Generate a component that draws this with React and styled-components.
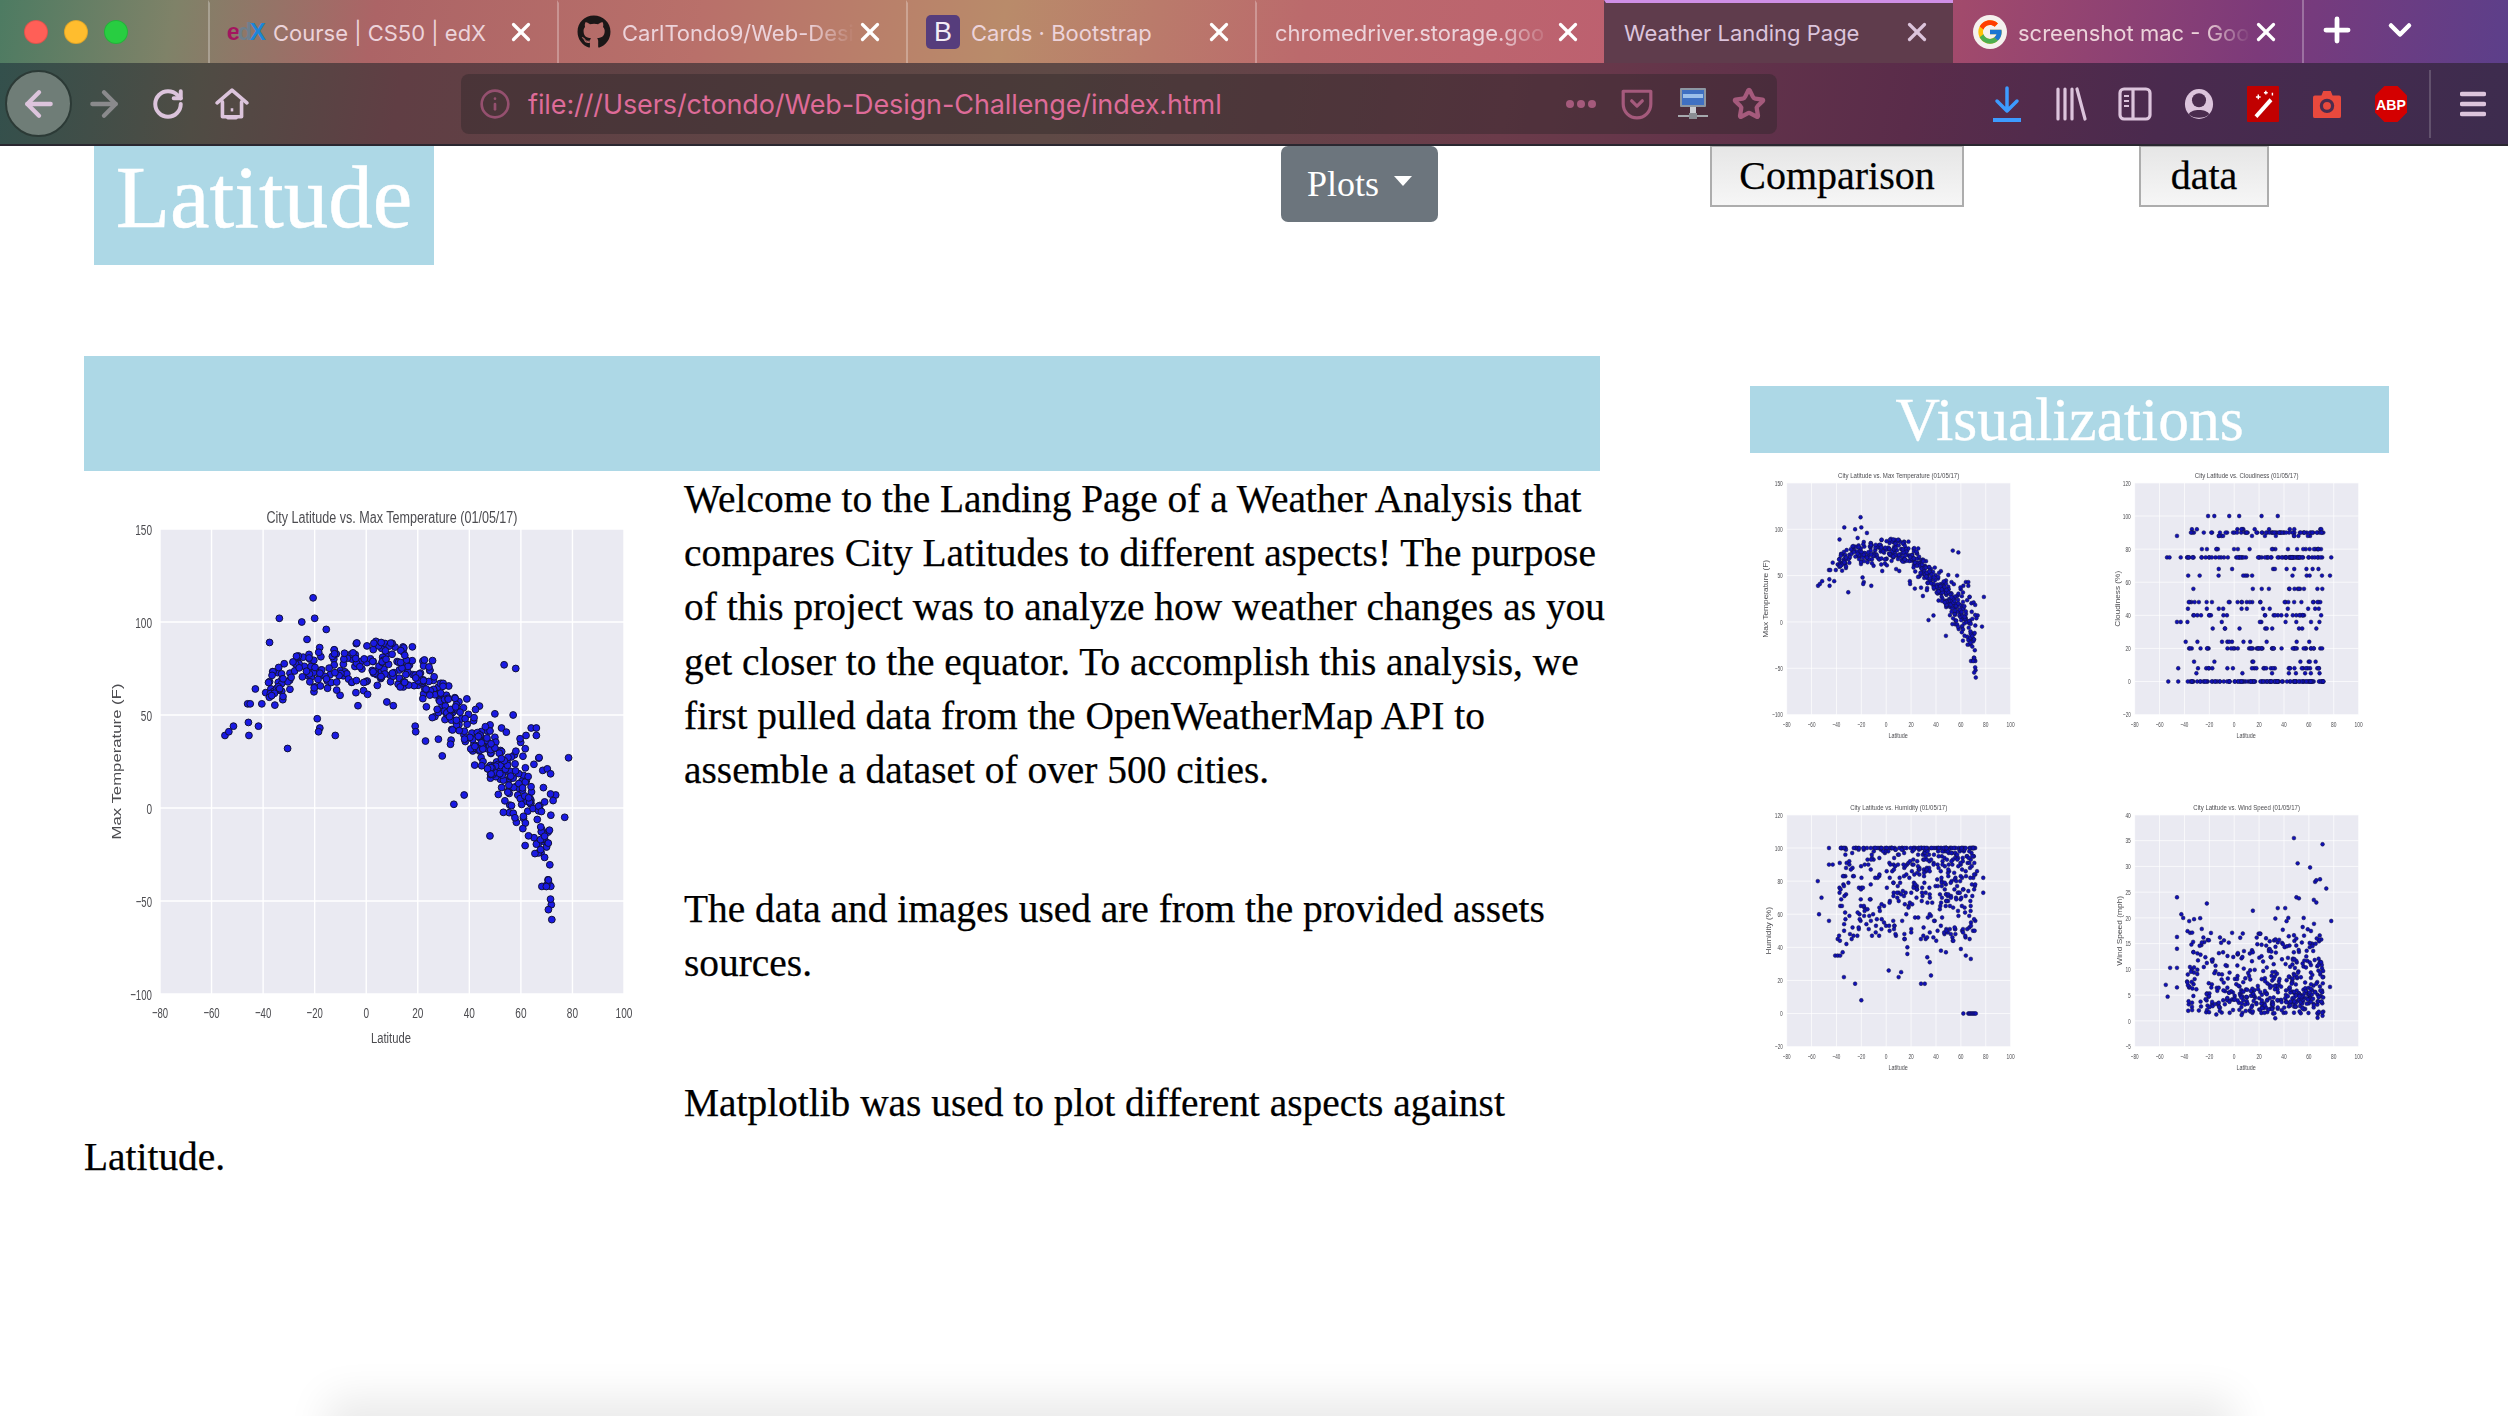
import React from 'react';
import styled, { createGlobalStyle } from 'styled-components';
import { ArrowLeft, ArrowRight, RotateCw, X, Plus, ChevronDown, Info, Star } from 'lucide-react';
import { FaGithub } from 'react-icons/fa';
import { FcGoogle } from 'react-icons/fc';

const GlobalStyle = createGlobalStyle`
  html, body {
    margin: 0;
    padding: 0;
    background: #fff;
  }
  * {
    box-sizing: border-box;
  }
`;

const Page = styled.div`
  position: relative;
  width: 2508px;
  height: 1416px;
  overflow: hidden;
  font-family: "Liberation Serif", serif;
  color: #000;
`;

const BrowserChrome = styled.header`
  height: 146px;
  background: #2a2730;
`;

const TabStrip = styled.div`
  display: flex;
  height: 63px;
  padding-left: 208px;
  background: linear-gradient(100deg, #4d7b62 0%, #7f8268 7%, #ac6466 15%, #b9706a 28%, #b98b6a 40%, #bb6a6c 52%, #bd5f70 66%, #a14a6c 78%, #7c3a7a 90%, #5c3f8a 100%);
`;

const Lights = styled.div`
  display: flex;
  align-items: center;
  gap: 16px;
  width: 0;
  margin-left: -184px;
  margin-right: 184px;
`;

const Light = styled.span`
  flex: none;
  width: 24px;
  height: 24px;
  border-radius: 50%;
  background: ${(p) => p.$color};
  border: 1px solid rgba(0, 0, 0, 0.12);
`;

const Tab = styled.div`
  display: flex;
  align-items: center;
  width: 349px;
  height: 63px;
  padding: 0 21px 2px 18px;
  border-left: 2px solid ${(p) => (p.$plain ? 'transparent' : 'rgba(255, 255, 255, 0.28)')};
  background: ${(p) => (p.$active ? '#5f3c4c' : 'transparent')};
  border-top: 3px solid ${(p) => (p.$active ? '#cf8fe6' : 'transparent')};
  color: ${(p) => (p.$active ? '#dcc4dc' : '#fff')};
  font-family: Inter, "Liberation Sans", sans-serif;
`;

const TabIcon = styled.span`
  display: flex;
  flex: none;
  align-items: center;
  justify-content: center;
  width: 34px;
  height: 34px;
  margin-right: 11px;
`;

const TabTitle = styled.span`
  flex: 1;
  overflow: hidden;
  padding-top: 2px;
  white-space: nowrap;
  font-size: 22px;
  color: ${(p) => (p.$active ? '#dcc4dc' : '#ecd3da')};
  ${(p) => p.$fade && 'mask-image: linear-gradient(90deg, #000 80%, transparent 100%);'}
`;

const EdxLogo = styled.span`
  font-family: "Liberation Sans", sans-serif;
  font-size: 24px;
  font-weight: 700;
  letter-spacing: -2.5px;
  color: #a3155f;
  & > i {
    font-style: normal;
    color: #6f7f8c;
  }
  & > b {
    color: #1c86d8;
  }
`;

const BootstrapLogo = styled.span`
  display: flex;
  align-items: center;
  justify-content: center;
  width: 34px;
  height: 34px;
  border-radius: 5px;
  background: #563d7c;
  color: #f2ecf6;
  font-family: "Liberation Sans", sans-serif;
  font-size: 27px;
`;

const GoogleBadge = styled.span`
  display: flex;
  align-items: center;
  justify-content: center;
  width: 34px;
  height: 34px;
  border-radius: 50%;
  background: #f5f1ee;
`;

const StripActions = styled.div`
  display: flex;
  align-items: center;
  height: 63px;
  padding-bottom: 4px;
  border-left: 2px solid rgba(255, 255, 255, 0.28);
  color: #fff;
`;

const StripButton = styled.span`
  display: flex;
  align-items: center;
  justify-content: center;
  width: ${(p) => p.$width}px;
`;

const Toolbar = styled.div`
  display: flex;
  align-items: center;
  height: 81px;
  padding-left: 5px;
  background: linear-gradient(100deg, #33504c 0%, #4f4c44 8%, #603e44 16%, #5f4a46 42%, #6b3b4a 60%, #5a2c4a 76%, #4a2a4e 86%, #3d2c4e 100%);
`;

const BackCircle = styled.span`
  display: flex;
  align-items: center;
  justify-content: center;
  width: 67px;
  height: 67px;
  border-radius: 50%;
  background: #6f7d77;
  border: 2px solid #2c3a36;
  color: #dcc4dc;
`;

const ToolCell = styled.span`
  display: flex;
  flex: none;
  align-items: center;
  justify-content: center;
  width: 64px;
  height: 64px;
  color: ${(p) => p.$color || '#dcc4dc'};
`;

const UrlBar = styled.div`
  display: flex;
  align-items: center;
  width: 1316px;
  height: 60px;
  margin: 0 198px 0 197px;
  padding-left: 18px;
  border-radius: 8px;
  background: rgba(45, 38, 40, 0.42);
  font-family: Inter, "Liberation Sans", sans-serif;
`;

const UrlText = styled.span`
  flex: 1;
  margin-left: 17px;
  padding-top: 2px;
  font-size: 27px;
  letter-spacing: -0.1px;
  color: #de6b98;
`;

const UrlCell = styled.span`
  display: flex;
  flex: none;
  align-items: center;
  justify-content: center;
  width: 56px;
  color: #a55a7c;
`;

const ToolSep = styled.span`
  width: 2px;
  height: 68px;
  margin: 0 10px 0 6px;
  background: rgba(255, 255, 255, 0.18);
`;

const TopNav = styled.nav`
  display: grid;
  grid-template-columns: 1187px 429px 429px auto;
  align-items: start;
  height: 119px;
  padding-left: 94px;
`;

const Title = styled.h1`
  width: 340px;
  height: 119px;
  margin: 0;
  background: #add8e6;
  color: #fff;
  font-size: 89px;
  font-weight: 400;
  line-height: 102px;
  text-align: center;
  -webkit-text-stroke: 0.5px #fff;
`;

const DropdownButton = styled.button`
  display: flex;
  align-items: center;
  width: 157px;
  height: 76px;
  padding: 0 0 0 26px;
  border: none;
  border-radius: 7px;
  background: #6c757d;
  color: #fff;
  font-family: inherit;
  font-size: 36px;
  &::after {
    content: '';
    margin: -6px 0 0 15px;
    border-top: 10px solid #fff;
    border-left: 9px solid transparent;
    border-right: 9px solid transparent;
  }
`;

const PlainButton = styled.button`
  height: 61px;
  width: ${(p) => p.$width}px;
  padding: 0 0 2px;
  border: 2px solid #adadad;
  border-top-width: 1px;
  background: linear-gradient(#e6e6e6, #f6f6f6);
  color: #000;
  font-family: inherit;
  font-size: 40px;
  -webkit-text-stroke: 0.25px #000;
`;

const Main = styled.main`
  display: flex;
  align-items: flex-start;
  gap: 150px;
  margin-top: 91px;
  padding-left: 84px;
`;

const Article = styled.section`
  width: 1516px;
`;

const Band = styled.div`
  height: 115px;
  margin-bottom: 1px;
  background: #add8e6;
`;

const FloatChart = styled.div`
  float: left;
  margin: 15px 24px 44px 0;
`;

const Para = styled.p`
  margin: 0 0 85px;
  font-size: 39.4px;
  line-height: 54.2px;
  white-space: nowrap;
  -webkit-text-stroke: 0.25px #000;
`;

const Aside = styled.aside`
  width: 639px;
  padding-top: 30px;
`;

const AsideTitle = styled.h2`
  height: 67px;
  margin: 0 0 9px;
  background: #add8e6;
  color: #fff;
  font-size: 61.5px;
  font-weight: 400;
  line-height: 66px;
  text-align: center;
  -webkit-text-stroke: 0.4px #fff;
`;

const ChartGrid = styled.div`
  display: grid;
  grid-template-columns: 278px 278px;
  column-gap: 70px;
  row-gap: 48px;
`;

const ChartSvg = styled.svg`
  display: block;
  width: ${(p) => (p.$small ? 278 : 576)}px;
  height: ${(p) => (p.$small ? 284 : 570)}px;
  filter: blur(${(p) => (p.$small ? 0.45 : 0.5)}px);
  font-family: "Liberation Sans", sans-serif;
  & text {
    fill: #4c4c50;
  }
`;

const BottomShadow = styled.div`
  position: absolute;
  left: 345px;
  width: 1870px;
  bottom: -40px;
  height: 40px;
  box-shadow: 0 0 42px 18px rgba(0, 0, 0, 0.085);
`;

// seeded so the dots stay put between runs
let seed = 20170105;
const rnd = () => {
  seed = (seed * 1664525 + 1013904223) % 4294967296;
  return seed / 4294967296;
};
const gauss = () => (rnd() + rnd() + rnd() - 1.5) / 0.75;

const lerp = (table, x) => {
  for (let i = 1; i < table.length; i++) {
    if (x <= table[i][0]) {
      const [x0, y0] = table[i - 1];
      const [x1, y1] = table[i];
      return y0 + ((x - x0) / (x1 - x0)) * (y1 - y0);
    }
  }
  return table[table.length - 1][1];
};

const tempCurve = [[-60, 45], [-40, 62], [-25, 74], [-10, 76], [10, 77], [20, 73], [30, 56], [40, 42], [50, 27], [60, 10], [72, -12], [80, -5]];
const spread = [[-60, 6], [-20, 10], [20, 8], [40, 12], [55, 15], [72, 30]];

const lats = [];
for (let i = 0; i < 500; i++) {
  const r = rnd();
  let lat;
  if (r < 0.2) lat = -38 + rnd() * 28;
  else if (r < 0.42) lat = -10 + rnd() * 30;
  else if (r < 0.72) lat = 20 + rnd() * 30;
  else lat = 48 + rnd() * 24;
  lats.push(lat);
}

const clamp = (v, a, b) => Math.min(b, Math.max(a, v));

const tempPoints = [
  [-54.8, 39], [-53.3, 41], [-51.5, 44], [-45.5, 39], [-45.7, 46], [-41.8, 44], [-30.5, 32], [-33.7, 102],
  [-25, 100], [-20.6, 113], [-20, 102], [-15.5, 96], [-37.5, 89], [-12, 39], [-19, 48], [-18, 43], [-18.5, 41],
  [53.5, 77], [58, 75], [57, 50], [77, -5], [78.5, 27], [73.5, 7], [72.5, 4], [72, -60], [71.8, -52], [71.5, -49],
  [34, 2], [48, -15], [52.5, 43], [64, 43], [66, 43], [66, 39], [62, 39], [19, 44], [19.2, 41], [23, 36], [28, 37],
  [29.5, 28], [38, 7], [-46, 56], [-45, 56], [-43, 64], [-40.5, 56], [-39, 62], [-3.2, 55], [-4, 62], [8, 57], [10.5, 55],
  ...lats.map((lat) => [lat, lerp(tempCurve, lat) + gauss() * lerp(spread, lat)]),
];

const cloudLevels = [0, 0, 0, 0, 0, 0, 0, 0, 0, 5, 8, 8, 12, 20, 20, 20, 24, 32, 36, 40, 40, 44, 48, 48, 56, 64, 68, 75, 75, 75, 75, 75, 75, 80, 88, 90, 90, 90, 90, 90, 92];
const cloudPoints = [
  [-46, 88], [-54, 75], [-52, 75], [-43, 75], [-39, 24], [-46, 36], [-43, 36], [77, 64], [78, 75],
  [-21, 100], [-16, 100], [-4, 100], [4, 100], [22, 100], [35, 100], [-34, 92], [-30, 92], [-53, 0], [-45, 0], [-45, 8],
  ...lats.map((lat) => [lat, cloudLevels[Math.floor(rnd() * cloudLevels.length)]]),
];

const humidityPoints = [
  [-55, 80], [-54, 60], [-52, 70], [-46, 100], [-46, 90], [-46, 56], [-43, 90], [-39, 45], [-41, 35], [-39, 35], [-37, 35],
  [-34, 22], [-25, 18], [-20, 8], [-35, 37], [-32, 42], [78, 82], [78, 73], [73, 86], [28, 18], [31, 18], [36, 23],
  [62, 0], [66, 0], [67, 0], [68, 0], [69, 0], [70, 0], [71, 0], [72, 0], [60, 39], [64, 35], [68, 33],
  [2, 26], [10, 22], [12, 25], [17, 36], [17, 40], [33, 34], [35, 31], [44, 38], [48, 37],
  ...lats.map((lat) => [lat, rnd() < 0.16 ? 100 : Math.round(100 - Math.pow(rnd(), 1.5) * 56)]),
];

const windPoints = [
  [-55, 7], [-53.5, 4.7], [-51.5, 10.3], [-46, 24], [-46, 16.3], [-46, 14], [-46, 10.3], [-46, 6.5], [-42.5, 20.7], [-41, 20],
  [-22, 22.8], [15, 21.4], [48, 35.5], [71, 34.3], [51, 30.6], [61, 29.8], [69, 27.5], [65, 27], [66, 27.3], [74, 25.7],
  [50, 24], [52, 23.8], [64, 23.5], [66, 23], [35, 21.9], [41, 21.9], [78, 19.4], [77, 6.6], [33, 0.5], [67, 0.6], [71, 1],
  ...lats.map((lat) => [lat, clamp(1.1 + rnd() * 4.5 + Math.pow(rnd(), 2.6) * 15 + (lat < -25 ? rnd() * 5 : 0), 1, 20)]),
];

// plot box inside the 576x570 picture
const AX = { left: 76, right: 540, top: 42, bottom: 507 };
const xTicks = [-80, -60, -40, -20, 0, 20, 40, 60, 80, 100];

const range = (from, to, step) => {
  const out = [];
  for (let v = from; v <= to; v += step) out.push(v);
  return out;
};

const tickText = (v) => String(v).replace('-', '\u2212');
const tickLen = (v) => String(Math.abs(v)).length * 5.6 + (v < 0 ? 5 : 0);

function Chart({ title, titleLen, yLabel, yLabelLen, labelX = 37, yMin, yMax, yStep, points, small }) {
  const px = (v) => AX.left + ((v + 80) / 180) * (AX.right - AX.left);
  const py = (v) => AX.bottom - ((v - yMin) / (yMax - yMin)) * (AX.bottom - AX.top);
  const yTicks = range(yMin, yMax, yStep);
  const midY = (AX.top + AX.bottom) / 2;
  return (
    <ChartSvg viewBox="0 0 576 570" preserveAspectRatio="none" $small={small}>
      <rect x={AX.left} y={AX.top} width={AX.right - AX.left} height={AX.bottom - AX.top} fill="#eaeaf2" />
      {xTicks.map((t) => (
        <line key={t} x1={px(t)} x2={px(t)} y1={AX.top} y2={AX.bottom} stroke="#fff" strokeWidth="1.4" />
      ))}
      {yTicks.map((t) => (
        <line key={t} x1={AX.left} x2={AX.right} y1={py(t)} y2={py(t)} stroke="#fff" strokeWidth="1.4" />
      ))}
      {points.map(([x, y], i) => (
        <circle
          key={i}
          cx={px(x)}
          cy={py(y)}
          r={small ? 3.9 : 3.4}
          fill={small ? '#1010b8' : '#1a1ae4'}
          stroke="#12123a"
          strokeWidth="1"
        />
      ))}
      <text x={(AX.left + AX.right) / 2} y={small ? 33 : 36} fontSize="16" textAnchor="middle" textLength={titleLen} lengthAdjust="spacingAndGlyphs">
        {title}
      </text>
      {xTicks.map((t) => (
        <text key={t} x={px(t)} y="531" fontSize="15.5" textAnchor="middle" textLength={tickLen(t)} lengthAdjust="spacingAndGlyphs">
          {tickText(t)}
        </text>
      ))}
      {yTicks.map((t) => (
        <text key={t} x="68" y={py(t) + 5.5} fontSize="15.5" textAnchor="end" textLength={tickLen(t)} lengthAdjust="spacingAndGlyphs">
          {tickText(t)}
        </text>
      ))}
      <text x={307} y={small ? 553 : 556} fontSize="15.5" textAnchor="middle" textLength="40" lengthAdjust="spacingAndGlyphs">
        Latitude
      </text>
      <text
        x={labelX}
        y={midY}
        fontSize="13"
        textAnchor="middle"
        textLength={yLabelLen}
        lengthAdjust="spacingAndGlyphs"
        transform={`rotate(-90 ${labelX} ${midY})`}
      >
        {yLabel}
      </text>
    </ChartSvg>
  );
}

const tempChart = {
  title: 'City Latitude vs. Max Temperature (01/05/17)',
  titleLen: 251,
  yLabel: 'Max Temperature (F)',
  yLabelLen: 156,
  yMin: -100,
  yMax: 150,
  yStep: 50,
  points: tempPoints,
};

const smallCharts = [
  tempChart,
  {
    title: 'City Latitude vs. Cloudiness (01/05/17)',
    titleLen: 215,
    yLabel: 'Cloudiness (%)',
    yLabelLen: 112,
    labelX: 45,
    yMin: -20,
    yMax: 120,
    yStep: 20,
    points: cloudPoints,
  },
  {
    title: 'City Latitude vs. Humidity (01/05/17)',
    titleLen: 201,
    yLabel: 'Humidity (%)',
    yLabelLen: 95,
    labelX: 43,
    yMin: -20,
    yMax: 120,
    yStep: 20,
    points: humidityPoints,
  },
  {
    title: 'City Latitude vs. Wind Speed (01/05/17)',
    titleLen: 221,
    yLabel: 'Wind Speed (mph)',
    yLabelLen: 140,
    labelX: 49,
    yMin: -5,
    yMax: 40,
    yStep: 5,
    points: windPoints,
  },
];

const HomeIcon = () => (
  <svg width="34" height="34" viewBox="0 0 32 32" fill="none" stroke="currentColor" strokeLinejoin="round" strokeLinecap="round">
    <path d="M2 15 16 3l14 12" strokeWidth="3.4" />
    <path d="M7 14v14h18V14" strokeWidth="3.4" />
    <path d="M12 29h8" strokeWidth="3" />
    <rect x="14.800" y="20" width="2.400" height="3" fill="currentColor" stroke="none" />
  </svg>
);

const DotsIcon = () => (
  <svg width="34" height="12" viewBox="0 0 34 12" fill="currentColor">
    <circle cx="6" cy="6" r="4" />
    <circle cx="17" cy="6" r="4" />
    <circle cx="28" cy="6" r="4" />
  </svg>
);

const PocketIcon = () => (
  <svg width="34" height="32" viewBox="0 0 32 30" fill="none" stroke="currentColor" strokeWidth="3" strokeLinecap="round" strokeLinejoin="round">
    <path d="M3 3h26v12a13 13 0 0 1-26 0z" />
    <path d="m11 12 5 5 5-5" />
  </svg>
);

const NetworkIcon = () => (
  <svg width="30" height="32" viewBox="0 0 30 32">
    <rect x="2" y="0" width="26" height="19" rx="1" fill="#8d97a3" />
    <rect x="4" y="2" width="22" height="15" fill="#3f70c2" />
    <rect x="5" y="6" width="20" height="4" fill="#9cc0ea" />
    <rect x="12" y="19" width="6" height="7" fill="#c9ccd2" />
    <rect x="0" y="27" width="30" height="2" fill="#a6a9ae" />
    <rect x="11" y="25" width="8" height="6" fill="#8a8e94" />
  </svg>
);

const DownloadIcon = () => (
  <svg width="32" height="36" viewBox="0 0 32 36" fill="none" stroke="#3d9bff" strokeWidth="3.5" strokeLinecap="round" strokeLinejoin="round">
    <path d="M16 2v23M6 15l10 10 10-10" />
    <path d="M2 34h28" strokeWidth="4" strokeLinecap="butt" />
  </svg>
);

const LibraryIcon = () => (
  <svg width="32" height="34" viewBox="0 0 32 34" fill="none" stroke="currentColor" strokeWidth="3.2" strokeLinecap="round">
    <path d="M3 2v30M10 2v30M17 2v30M22 2l8 30" />
  </svg>
);

const SidebarIcon = () => (
  <svg width="34" height="34" viewBox="0 0 34 34" fill="none" stroke="currentColor" strokeWidth="3.2">
    <rect x="2" y="2" width="30" height="30" rx="4" />
    <path d="M15 2v30" />
    <path d="M6 9h5M6 14h5M6 19h5" strokeWidth="2.2" />
  </svg>
);

const AccountIcon = () => (
  <svg width="30" height="34" viewBox="0 0 32 34">
    <ellipse cx="16" cy="17" rx="15" ry="16" fill="currentColor" />
    <circle cx="16" cy="13" r="7.5" fill="#4a2c4e" />
    <path d="M5 28c3-6 19-6 22 0-5 5-17 5-22 0z" fill="#4a2c4e" />
  </svg>
);

const WandIcon = () => (
  <svg width="32" height="36" viewBox="0 0 34 38">
    <rect width="34" height="38" rx="1" fill="#c10000" />
    <path d="M8 31 24 13l3 3L11 34z" fill="#fff" />
    <path d="M12 9v5M9.500 11.500h5M20 5v4M18 7h4M27 7v3" stroke="#fff" strokeWidth="1.500" />
  </svg>
);

const CameraIcon = () => (
  <svg width="28" height="30" viewBox="0 0 30 32">
    <path d="M2 7h7l2-5h8l2 5h7a2 2 0 0 1 2 2v20a2 2 0 0 1-2 2H2a2 2 0 0 1-2-2V9a2 2 0 0 1 2-2z" fill="#e8493d" />
    <circle cx="15" cy="18" r="6" fill="none" stroke="#4a2c4e" strokeWidth="3.500" />
  </svg>
);

const AbpIcon = () => (
  <svg width="32" height="38" viewBox="0 0 34 38">
    <path d="M10 0h14l10 10v18L24 38H10L0 28V10z" fill="#d40000" />
    <text x="17" y="25" fill="#fff" fontFamily="Liberation Sans, sans-serif" fontSize="15" fontWeight="700" textAnchor="middle">
      ABP
    </text>
  </svg>
);

const MenuIcon = () => (
  <svg width="26" height="26" viewBox="0 0 26 26" stroke="currentColor" strokeWidth="4.500" strokeLinecap="round">
    <path d="M2 3h22M2 13h22M2 23h22" />
  </svg>
);

const tabs = [
  { title: 'Course | CS50 | edX', icon: <EdxLogo>e<i>d</i><b>X</b></EdxLogo> },
  { title: 'CarlTondo9/Web-Desi', fade: true, icon: <FaGithub size={34} color="#1b1717" /> },
  { title: 'Cards · Bootstrap', icon: <BootstrapLogo>B</BootstrapLogo> },
  { title: 'chromedriver.storage.goo', fade: true },
  { title: 'Weather Landing Page', active: true },
  { title: 'screenshot mac - Goo', fade: true, plain: true, icon: <GoogleBadge><FcGoogle size={28} /></GoogleBadge> },
];

export default function App() {
  return (
    <Page>
      <GlobalStyle />
      <BrowserChrome>
        <TabStrip>
          <Lights>
            <Light $color="#ff5f57" />
            <Light $color="#ffbd2e" />
            <Light $color="#28cd41" />
          </Lights>
          {tabs.map((tab) => (
            <Tab key={tab.title} $active={tab.active} $plain={tab.plain || tab.active}>
              {tab.icon && <TabIcon>{tab.icon}</TabIcon>}
              <TabTitle $active={tab.active} $fade={tab.fade}>{tab.title}</TabTitle>
              <X size={30} strokeWidth={2.6} />
            </Tab>
          ))}
          <StripActions>
            <StripButton $width={66}><Plus size={38} strokeWidth={3} /></StripButton>
            <StripButton $width={60}><ChevronDown size={36} strokeWidth={3} /></StripButton>
          </StripActions>
        </TabStrip>
        <Toolbar>
          <BackCircle><ArrowLeft size={40} strokeWidth={2.6} /></BackCircle>
          <ToolCell $color="#8a8a8c"><ArrowRight size={40} strokeWidth={2.6} /></ToolCell>
          <ToolCell><RotateCw size={34} strokeWidth={2.8} /></ToolCell>
          <ToolCell><HomeIcon /></ToolCell>
          <UrlBar>
            <Info size={32} color="#95506f" strokeWidth={2} />
            <UrlText>file:///Users/ctondo/Web-Design-Challenge/index.html</UrlText>
            <UrlCell><DotsIcon /></UrlCell>
            <UrlCell><PocketIcon /></UrlCell>
            <UrlCell><NetworkIcon /></UrlCell>
            <UrlCell><Star size={34} strokeWidth={3} /></UrlCell>
          </UrlBar>
          <ToolCell><DownloadIcon /></ToolCell>
          <ToolCell><LibraryIcon /></ToolCell>
          <ToolCell><SidebarIcon /></ToolCell>
          <ToolCell><AccountIcon /></ToolCell>
          <ToolCell><WandIcon /></ToolCell>
          <ToolCell><CameraIcon /></ToolCell>
          <ToolCell><AbpIcon /></ToolCell>
          <ToolSep />
          <ToolCell><MenuIcon /></ToolCell>
        </Toolbar>
      </BrowserChrome>

      <TopNav>
        <Title>Latitude</Title>
        <DropdownButton>Plots</DropdownButton>
        <PlainButton $width={254}>Comparison</PlainButton>
        <PlainButton $width={130}>data</PlainButton>
      </TopNav>

      <Main>
        <Article>
          <Band />
          <FloatChart>
            <Chart {...tempChart} />
          </FloatChart>
          <Para>
            Welcome to the Landing Page of a Weather Analysis that<br />
            compares City Latitudes to different aspects! The purpose<br />
            of this project was to analyze how weather changes as you<br />
            get closer to the equator. To accomplish this analysis, we<br />
            first pulled data from the OpenWeatherMap API to<br />
            assemble a dataset of over 500 cities.
          </Para>
          <Para>
            The data and images used are from the provided assets<br />
            sources.
          </Para>
          <Para>
            Matplotlib was used to plot different aspects against<br />
            Latitude.
          </Para>
        </Article>
        <Aside>
          <AsideTitle>Visualizations</AsideTitle>
          <ChartGrid>
            {smallCharts.map((chart) => (
              <Chart key={chart.title} {...chart} small />
            ))}
          </ChartGrid>
        </Aside>
      </Main>
      <BottomShadow />
    </Page>
  );
}
